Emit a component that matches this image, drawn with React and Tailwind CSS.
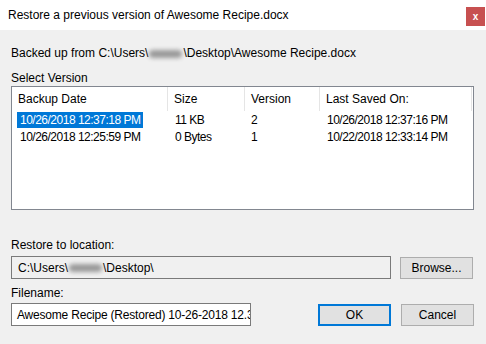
const rows = [
  { date: "10/26/2018 12:37:18 PM", size: "11 KB", version: "2", saved: "10/26/2018 12:37:16 PM", selected: true },
  { date: "10/26/2018 12:25:59 PM", size: "0 Bytes", version: "1", saved: "10/22/2018 12:33:14 PM" },
];

const Blur = () => (
  <span className="inline-block w-[33px] h-[8px] mx-[1px] bg-[#9a9a9a] blur-[2px] align-middle rounded-sm" />
);

const Button = ({ children, primary }) => (
  <button
    className={
      "w-[73px] h-[22px] bg-[#e1e1e1] text-[12px] text-black " +
      (primary ? "border-2 border-[#0078d7]" : "border border-[#adadad]")
    }
  >
    {children}
  </button>
);

export default function App() {
  return (
    <div className="w-[486px] h-[344px] bg-[#f0f0f0] flex flex-col font-['Liberation_Sans',Arial,sans-serif] text-[12px] text-black overflow-hidden">
      {/* title bar */}
      <div className="h-[30px] bg-white flex items-start shrink-0">
        <div className="pl-[8px] pt-[7px] leading-[16px]">Restore a previous version of Awesome Recipe.docx</div>
        <div className="ml-auto mt-[7px] mr-[1px] w-[19px] h-[19px] bg-[#c75050] text-white text-[10px] font-bold flex items-center justify-center">
          x
        </div>
      </div>

      <div className="pl-[11px] pr-[12px]">
        <div className="mt-[15px] leading-[16px]">
          Backed up from C:\Users\<Blur />\Desktop\Awesome Recipe.docx
        </div>
        <div className="mt-[10px] leading-[15px]">Select Version</div>

        {/* list */}
        <div className="w-[463px] h-[124px] bg-white border border-[#828790]">
          <div className="flex h-[24px] items-center">
            <div className="w-[156px] h-full pl-[6px] flex items-center border-r border-[#e5e5e5]">Backup Date</div>
            <div className="w-[77px] h-full pl-[6px] flex items-center border-r border-[#e5e5e5]">Size</div>
            <div className="w-[75px] h-full pl-[6px] flex items-center border-r border-[#e5e5e5]">Version</div>
            <div className="w-[152px] h-full pl-[6px] flex items-center border-r border-[#e5e5e5]">Last Saved On:</div>
          </div>
          {rows.map((r) => (
            <div key={r.date} className="flex h-[17px] items-center tracking-[-0.5px]">
              <div className="w-[156px] pl-[5px]">
                <span
                  className={
                    "inline-block h-[16px] leading-[16px] px-[3px] " +
                    (r.selected ? "bg-[#0078d7] text-white" : "")
                  }
                >
                  {r.date}
                </span>
              </div>
              <div className="w-[77px] pl-[7px]">{r.size}</div>
              <div className="w-[75px] pl-[6px]">{r.version}</div>
              <div className="w-[152px] pl-[7px]">{r.saved}</div>
            </div>
          ))}
        </div>

        {/* restore location */}
        <div className="mt-[27px] leading-[16px]">Restore to location:</div>
        <div className="mt-[3px] flex items-center">
          <div className="w-[380px] h-[23px] border border-[#7a7a7a] bg-[#f0f0f0] pl-[6px] flex items-center">
            C:\Users\<Blur />\Desktop\
          </div>
          <div className="ml-[9px]">
            <Button>Browse...</Button>
          </div>
        </div>

        <div className="mt-[6px] leading-[16px]">Filename:</div>
        <div className="mt-[2px] flex items-center">
          <div className="w-[240px] h-[23px] border border-[#7a7a7a] bg-white pl-[5px] flex items-center overflow-hidden whitespace-nowrap tracking-[-0.2px]">
            Awesome Recipe (Restored) 10-26-2018 12.37.docx
          </div>
          <div className="ml-[67px]">
            <Button primary>OK</Button>
          </div>
          <div className="ml-[10px]">
            <Button>Cancel</Button>
          </div>
        </div>
      </div>
    </div>
  );
}
